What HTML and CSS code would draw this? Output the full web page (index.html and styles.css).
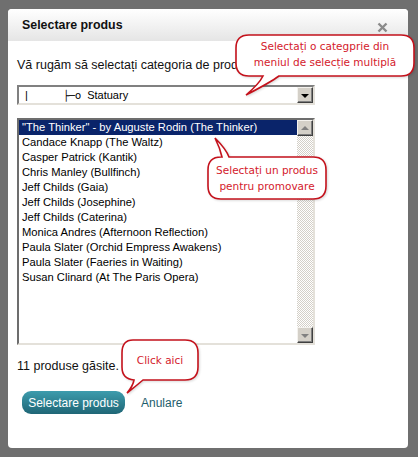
FILE: index.html
```html
<!DOCTYPE html>
<html>
<head>
<meta charset="utf-8">
<link rel="stylesheet" href="styles.css">
</head>
<body>
<div class="backdrop">
  <div class="dialog">
    <div class="header">
      <span class="title">Selectare produs</span>
      <svg class="close" width="11" height="11" viewBox="0 0 11 11"><path d="M1.5 1.5 L9.5 9.5 M9.5 1.5 L1.5 9.5" stroke="#8a8a8a" stroke-width="2.4"/></svg>
    </div>
    <div class="body">
      <p class="prompt">Vă rugăm să selectați categoria de produs</p>
      <div class="combo">
        <span class="combo-text"><span class="tree1">|</span><span class="tree2">├─o</span>Statuary</span>
        <span class="btn3d combo-btn"><span class="arrow-down"></span></span>
      </div>
      <div class="listbox">
        <div class="items">
          <div class="item selected">"The Thinker" - by Auguste Rodin (The Thinker)</div>
          <div class="item">Candace Knapp (The Waltz)</div>
          <div class="item">Casper Patrick (Kantik)</div>
          <div class="item">Chris Manley (Bullfinch)</div>
          <div class="item">Jeff Childs (Gaia)</div>
          <div class="item">Jeff Childs (Josephine)</div>
          <div class="item">Jeff Childs (Caterina)</div>
          <div class="item">Monica Andres (Afternoon Reflection)</div>
          <div class="item">Paula Slater (Orchid Empress Awakens)</div>
          <div class="item">Paula Slater (Faeries in Waiting)</div>
          <div class="item">Susan Clinard (At The Paris Opera)</div>
        </div>
        <div class="scrollbar">
          <span class="btn3d sb-btn"><span class="arrow-up"></span></span>
          <span class="track"></span>
          <span class="btn3d sb-btn"><span class="arrow-down dim"></span></span>
        </div>
      </div>
      <p class="count">11 produse găsite.</p>
      <div class="actions">
        <span class="primary">Selectare produs</span>
        <span class="cancel">Anulare</span>
      </div>
    </div>
  </div>

  <div class="callout c1">
    <svg width="184" height="66" viewBox="0 0 184 66">
      <path d="M14 1 H166 Q179 1 179 14 V29 Q179 42 166 42 H44 Q36 48 11 61 Q24 50 28 42 H14 Q1 42 1 29 V14 Q1 1 14 1 Z" fill="#fff" stroke="#c4121c" stroke-width="1.6"/>
    </svg>
    <span class="ctext">Selectați o categprie din<br>meniul de selecție multiplă</span>
  </div>
  <div class="callout c2">
    <svg width="122" height="64" viewBox="0 0 122 64">
      <path d="M8 1 Q19 12 22 20 H106 Q119 20 119 33 V49 Q119 62 106 62 H14 Q1 62 1 49 V33 Q1 20 14 20 H15 Q13 11 8 1 Z" fill="#fff" stroke="#c4121c" stroke-width="1.6"/>
    </svg>
    <span class="ctext">Selectați un produs<br>pentru promovare</span>
  </div>
  <div class="callout c3">
    <svg width="80" height="56" viewBox="0 0 80 56">
      <path d="M12 1 H64 Q77 1 77 14 V28 Q77 41 64 41 H22 Q15 47 6 54 Q12 47 13 41 Q1 40 1 28 V14 Q1 1 12 1 Z" fill="#fff" stroke="#c4121c" stroke-width="1.6"/>
    </svg>
    <span class="ctext">Click aici</span>
  </div>
</div>
</body>
</html>
```

FILE: styles.css
```css
* { box-sizing: border-box; }
html, body { margin: 0; padding: 0; }
body {
  width: 418px;
  height: 457px;
  background: #6f6f6f;
  font-family: "Liberation Sans", Arial, sans-serif;
  overflow: hidden;
}
.backdrop {
  position: relative;
  width: 418px;
  height: 457px;
  padding: 9px 10px 0 8px;
}
.dialog {
  position: relative;
  width: 400px;
  height: 439px;
  background: #fff;
  border-radius: 4px;
  overflow: hidden;
}
.header {
  height: 32px;
  background: linear-gradient(#ffffff, #e5e5e5);
  display: flex;
  align-items: center;
  justify-content: space-between;
  padding: 0 20px 0 14px;
}
.title {
  font-weight: bold;
  font-size: 12.4px;
  color: #111;
}
.close {
  margin-top: 5px;
}
.body {
  padding: 16px 0 0 9px;
  font-size: 12px;
  color: #111;
}
.prompt {
  margin: 0 0 12px 0;
  font-size: 12.5px;
  line-height: 16px;
}
.combo {
  width: 298px;
  height: 20px;
  border: 2px solid;
  border-color: #808080 #e4e1da #e4e1da #808080;
  display: flex;
  align-items: center;
  justify-content: space-between;
  background: #fff;
  font-size: 11px;
}
.combo-text {
  display: flex;
  align-items: center;
  color: #000;
  font-family: "Liberation Sans", Arial, sans-serif;
}
.tree1 {
  margin-left: 6px;
  width: 38px;
}
.tree2 {
  margin-right: 6px;
  font-family: "DejaVu Sans", sans-serif;
  font-size: 10px;
}
.btn3d {
  display: flex;
  align-items: center;
  justify-content: center;
  background: #d4d0c8;
  border: 1px solid;
  border-color: #f4f2ee #404040 #404040 #f4f2ee;
  box-shadow: inset -1px -1px 0 #808080;
}
.combo-btn {
  width: 16px;
  height: 16px;
}
.arrow-down {
  width: 0; height: 0;
  border-left: 4px solid transparent;
  border-right: 4px solid transparent;
  border-top: 4px solid #000;
  margin-top: 1px;
}
.arrow-down.dim { border-top-color: #808080; }
.arrow-up {
  width: 0; height: 0;
  border-left: 4px solid transparent;
  border-right: 4px solid transparent;
  border-bottom: 4px solid #808080;
}
.listbox {
  margin-top: 13px;
  width: 298px;
  height: 227px;
  border: 2px solid;
  border-color: #6d6d6d #e4e1da #e4e1da #6d6d6d;
  display: flex;
  background: #fff;
}
.items {
  flex: 1;
  font-size: 11.2px;
  line-height: 15px;
  color: #000;
}
.item {
  padding-left: 3px;
  white-space: nowrap;
  height: 15px;
}
.item.selected {
  background: #0a246a;
  color: #fff;
}
.scrollbar {
  width: 16px;
  display: flex;
  flex-direction: column;
}
.sb-btn {
  width: 16px;
  height: 16px;
  flex: none;
}
.track {
  flex: 1;
  background-color: #fff;
  background-image:
    linear-gradient(45deg, #d4d0c8 25%, transparent 25%, transparent 75%, #d4d0c8 75%),
    linear-gradient(45deg, #d4d0c8 25%, transparent 25%, transparent 75%, #d4d0c8 75%);
  background-size: 2px 2px;
  background-position: 0 0, 1px 1px;
}
.count {
  margin: 13px 0 0 0;
  font-size: 12.5px;
  line-height: 16px;
}
.actions {
  margin-top: 17px;
  padding-left: 5px;
  display: flex;
  align-items: center;
  gap: 16px;
}
.primary {
  display: inline-flex;
  align-items: center;
  justify-content: center;
  width: 103px;
  height: 23px;
  border-radius: 9px;
  background: linear-gradient(#3d9cad, #1f6676);
  color: #fff;
  font-size: 12px;
}
.cancel {
  color: #1d5d6c;
  font-size: 12px;
}
.callout {
  position: absolute;
}
.callout svg {
  position: absolute;
  left: 0;
  top: 0;
  filter: drop-shadow(1px 1px 1px rgba(0,0,0,0.15));
}
.ctext {
  position: absolute;
  color: #d4202c;
  font-family: "DejaVu Sans", Verdana, sans-serif;
  font-size: 10.5px;
  line-height: 16px;
  text-align: center;
  white-space: nowrap;
}
.c1 { left: 235px; top: 34px; width: 184px; height: 66px; }
.c1 .ctext { left: 0; width: 180px; top: 4px; }
.c2 { left: 207px; top: 137px; width: 122px; height: 64px; }
.c2 .ctext { left: 0; width: 120px; top: 25px; }
.c3 { left: 121px; top: 339px; width: 80px; height: 56px; }
.c3 .ctext { left: 0; width: 78px; top: 13px; }
```
